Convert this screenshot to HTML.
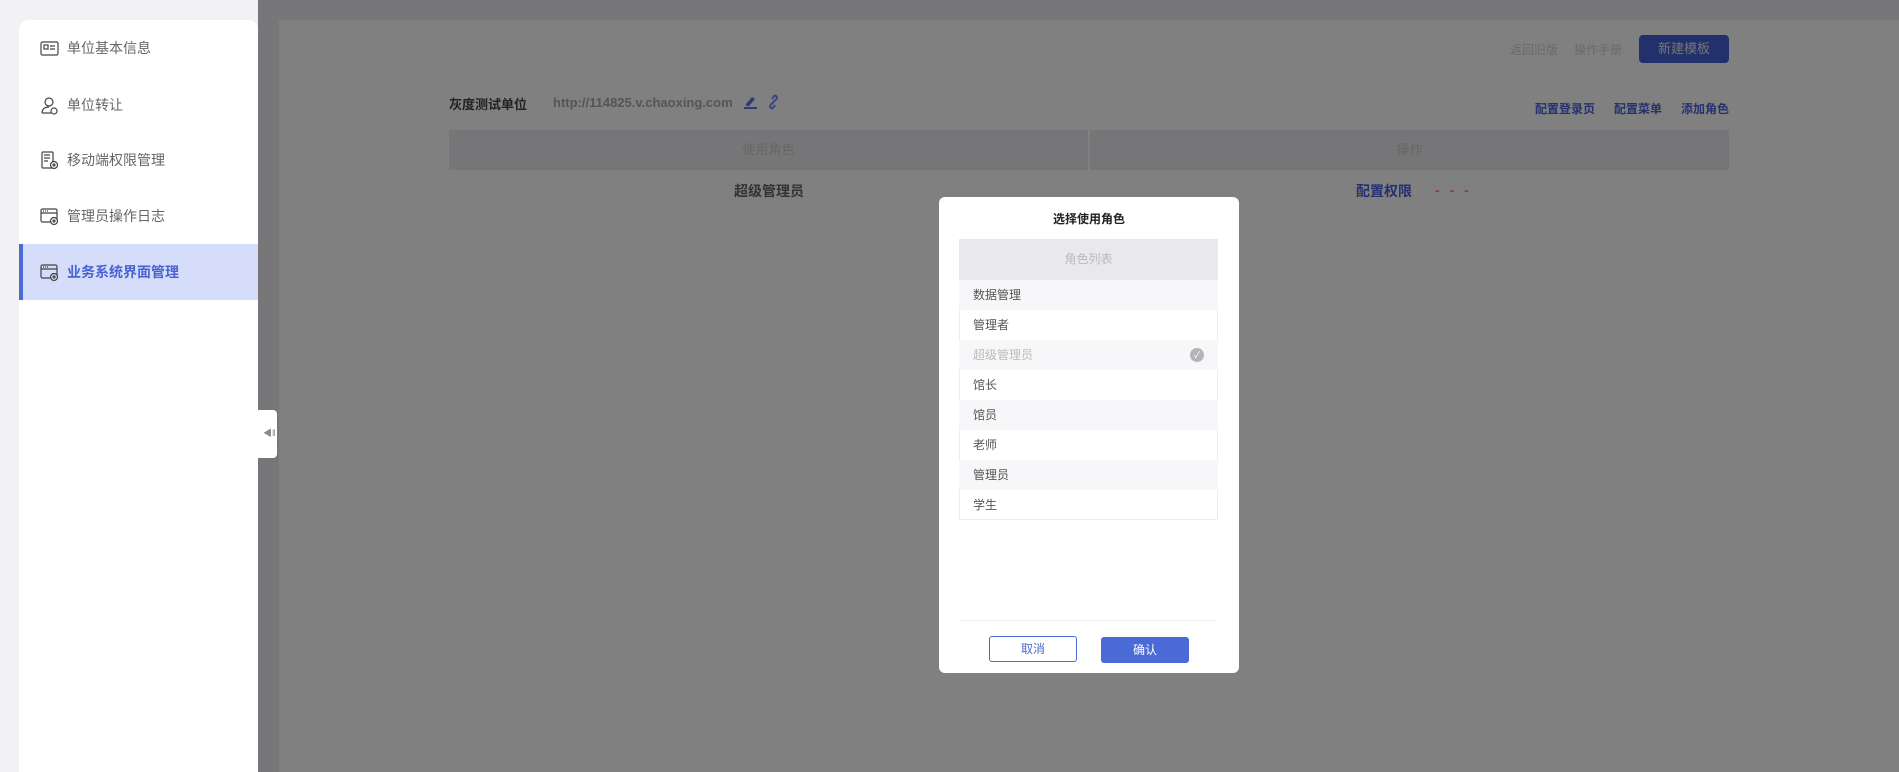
<!DOCTYPE html>
<html><head><meta charset="utf-8"><style>
*{margin:0;padding:0;box-sizing:border-box}
body{width:1899px;height:772px;overflow:hidden;background:#777779;font-family:"Liberation Sans","Noto Sans CJK SC",sans-serif;position:relative}
.a{position:absolute}
.side{left:0;top:0;width:258px;height:772px;background:#f2f2f5}
.card{left:19px;top:20px;width:239px;height:752px;background:#fff;border-radius:10px 10px 0 0}
.mi{position:absolute;left:19px;width:239px;height:56px;display:flex;align-items:center;padding-left:21px;font-size:14px;color:#666}
.mi svg{margin-right:8px}
.act{background:#d5ddfb;color:#4a63cf;font-weight:bold;border-left:4px solid #4a6bd6;padding-left:17px}
.panel{left:279px;top:20px;width:1620px;height:752px;background:#808080}
.t{position:absolute;white-space:nowrap}
.modal{left:939px;top:197px;width:300px;height:476px;background:#fff;border-radius:6px}
.row{position:absolute;left:20px;width:259px;height:30px;font-size:12px;color:#555;padding-left:14px;line-height:30px}
</style></head><body>
<div class="a side"></div>
<div class="a card"></div>
<div class="mi" style="top:20px"><svg width="19" height="15" viewBox="0 0 19 15" fill="none" stroke="#444" stroke-width="1.2"><rect x="1" y="1" width="17" height="13" rx="1.5"/><rect x="4" y="4" width="4" height="4"/><path d="M10 5h5M10 8h5"/></svg>单位基本信息</div>
<div class="mi" style="top:77px"><svg width="19" height="19" viewBox="0 0 19 19" fill="none" stroke="#444" stroke-width="1.2"><circle cx="9" cy="6" r="4"/><path d="M2 17c0-4 3-6 7-6M2 17h9"/><circle cx="14" cy="15" r="3"/></svg>单位转让</div>
<div class="mi" style="top:132px"><svg width="19" height="19" viewBox="0 0 19 19" fill="none" stroke="#444" stroke-width="1.2"><rect x="2" y="1" width="11" height="16" rx="1"/><path d="M4 4h6M4 7h6M4 10h4"/><circle cx="14" cy="14" r="3.5" fill="#fff"/><circle cx="14" cy="14" r="1"/></svg>移动端权限管理</div>
<div class="mi" style="top:188px"><svg width="19" height="19" viewBox="0 0 19 19" fill="none" stroke="#444" stroke-width="1.2"><rect x="1" y="2" width="16" height="13" rx="1.5"/><path d="M1 6h16M3 4h1M5 4h1M7 4h1"/><circle cx="14" cy="14" r="3.5" fill="#fff"/><circle cx="14" cy="14" r="1"/></svg>管理员操作日志</div>
<div class="mi act" style="top:244px"><svg width="19" height="19" viewBox="0 0 19 19" fill="none" stroke="#444" stroke-width="1.2"><rect x="1" y="2" width="16" height="13" rx="1.5"/><path d="M1 6h16M3 4h1M5 4h1M7 4h1"/><circle cx="14" cy="14" r="3.5" fill="#d5ddfb"/><circle cx="14" cy="14" r="1"/></svg>业务系统界面管理</div>
<div class="a" style="left:258px;top:410px;width:19px;height:48px;background:#fff;border-radius:0 4px 4px 0"></div>
<div class="t" style="left:263px;top:426px;font-size:9px;color:#888">◀‖</div>
<div class="a panel"></div>
<div class="t" style="left:1510px;top:41px;font-size:12px;color:#6a6a6a">返回旧版</div>
<div class="t" style="left:1574px;top:41px;font-size:12px;color:#6a6a6a">操作手册</div>
<div class="a" style="left:1639px;top:35px;width:90px;height:28px;background:#22306b;border-radius:4px;color:#777;font-size:13px;text-align:center;line-height:28px">新建模板</div>
<div class="t" style="left:449px;top:94px;font-size:13px;font-weight:bold;color:#222">灰度测试单位</div>
<div class="t" style="left:553px;top:95px;font-size:13px;font-weight:bold;color:#555">http://114825.v.chaoxing.com</div>
<svg class="a" style="left:743px;top:95px" width="15" height="15" viewBox="0 0 15 15"><path d="M3 9l6-7 3 2-6 7H3z" fill="#2c3a7c"/><rect x="1" y="12" width="13" height="2" fill="#2c3a7c"/></svg>
<svg class="a" style="left:766px;top:94px" width="15" height="16" viewBox="0 0 15 16" fill="none" stroke="#3a4682" stroke-width="2"><path d="M6 9l-2 3a2 2 0 003 2l2-3M9 7l2-3a2 2 0 00-3-2L6 5M6 10l3-4"/></svg>
<div class="t" style="left:1535px;top:100px;font-size:12px;font-weight:bold;color:#243170">配置登录页</div>
<div class="t" style="left:1614px;top:100px;font-size:12px;font-weight:bold;color:#243170">配置菜单</div>
<div class="t" style="left:1681px;top:100px;font-size:12px;font-weight:bold;color:#243170">添加角色</div>
<div class="a" style="left:449px;top:130px;width:639px;height:40px;background:#767678;color:#666;font-size:13px;text-align:center;line-height:40px">使用角色</div>
<div class="a" style="left:1090px;top:130px;width:639px;height:40px;background:#767678;color:#666;font-size:13px;text-align:center;line-height:40px">操作</div>
<div class="t" style="left:734px;top:181px;font-size:14px;font-weight:bold;color:#333">超级管理员</div>
<div class="t" style="left:1356px;top:181px;font-size:14px;font-weight:bold;color:#243170">配置权限</div>
<div class="t" style="left:1435px;top:182px;font-size:14px;font-weight:bold;color:#8a3a44;letter-spacing:3px">- - -</div>
<div class="a modal">
<div class="t" style="left:0;width:300px;text-align:center;top:13px;font-size:12px;font-weight:bold;color:#222">选择使用角色</div>
<div class="a" style="left:20px;top:42px;width:259px;height:281px;border:1px solid #ececf0"></div>
<div class="a" style="left:20px;top:42px;width:259px;height:41px;background:#e8e8ed;color:#bbb;font-size:12px;text-align:center;line-height:41px">角色列表</div>
<div class="row" style="top:83px;background:#f7f7f9">数据管理</div>
<div class="row" style="top:113px">管理者</div>
<div class="row" style="top:143px;background:#f7f7f9;color:#bbb">超级管理员<span style="position:absolute;right:14px;top:8px;width:14px;height:14px;border-radius:50%;background:#b5b5b8;color:#fff;font-size:9px;line-height:14px;text-align:center">✓</span></div>
<div class="row" style="top:173px">馆长</div>
<div class="row" style="top:203px;background:#f7f7f9">馆员</div>
<div class="row" style="top:233px">老师</div>
<div class="row" style="top:263px;background:#f7f7f9">管理员</div>
<div class="row" style="top:293px">学生</div>
<div class="a" style="left:20px;top:423px;width:258px;height:1px;background:#ececf0"></div>
<div class="a" style="left:50px;top:439px;width:88px;height:26px;border:1px solid #4a6bd6;border-radius:3px;color:#4a6bd6;font-size:12px;text-align:center;line-height:24px">取消</div>
<div class="a" style="left:162px;top:440px;width:88px;height:26px;background:#4a6bd6;border-radius:3px;color:#fff;font-size:12px;text-align:center;line-height:26px">确认</div>
</div>
</body></html>
